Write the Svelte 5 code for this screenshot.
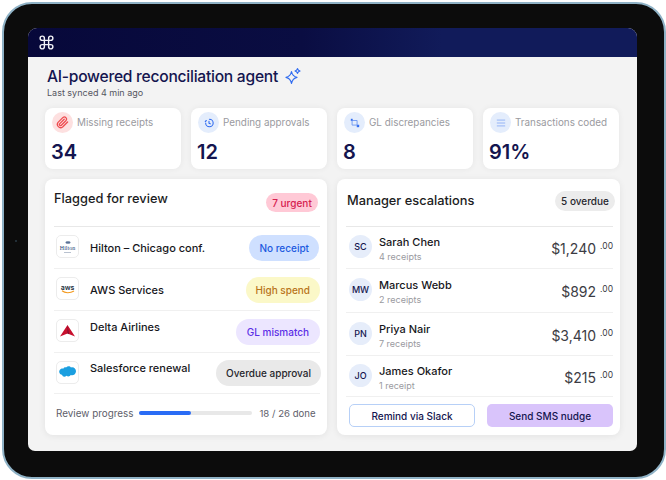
<script>
  const stats = [
    { kind: 'clip', tone: 'red', label: 'Missing receipts', value: '34' },
    { kind: 'clock', tone: 'blue', label: 'Pending approvals', value: '12' },
    { kind: 'crop', tone: 'blue', label: 'GL discrepancies', value: '8' },
    { kind: 'list', tone: 'blue', label: 'Transactions coded', value: '91%' }
  ];
  const flagged = [
    { logo: 'hilton', name: 'Hilton – Chicago conf.', tag: 'No receipt', tone: 't-blue', h: 42 },
    { logo: 'aws', name: 'AWS Services', tag: 'High spend', tone: 't-yellow', h: 42 },
    { logo: 'delta', name: 'Delta Airlines', tag: 'GL mismatch', tone: 't-purple', h: 42, up: true },
    { logo: 'sf', name: 'Salesforce renewal', tag: 'Overdue approval', tone: 't-grey', h: 41, up: true }
  ];
  const managers = [
    { init: 'SC', name: 'Sarah Chen', sub: '4 receipts', amt: '$1,240', h: 42 },
    { init: 'MW', name: 'Marcus Webb', sub: '2 receipts', amt: '$892', h: 44 },
    { init: 'PN', name: 'Priya Nair', sub: '7 receipts', amt: '$3,410', h: 43 },
    { init: 'JO', name: 'James Okafor', sub: '1 receipt', amt: '$215', h: 41 }
  ];
</script>

<div class="device">
  <span class="camera"></span>
  <div class="screen">
    <header class="topbar">
      <svg width="17" height="17" viewBox="0 0 24 24" fill="none" stroke="#f2f2f6" stroke-width="2" stroke-linejoin="round">
        <path d="M15 6v12a3 3 0 1 0 3-3H6a3 3 0 1 0 3 3V6a3 3 0 1 0-3 3h12a3 3 0 1 0-3-3" />
      </svg>
    </header>
    <main class="content">
      <div class="heading">
        <h1>AI-powered reconciliation agent</h1>
        <svg width="18" height="18" viewBox="0 0 18 18" fill="none" stroke="#2f6bf0" stroke-width="1.2" stroke-linejoin="round">
          <path d="M7.5 4.500C8.200 8 9.500 9.600 13 10.300 9.500 11 8.200 12.600 7.500 16.500 6.800 12.600 5.500 11 2 10.300 5.500 9.600 6.800 8 7.500 4.500Z" />
          <path d="M13.500 1.500C13.800 3 14.400 3.600 16 4 14.400 4.400 13.800 5 13.500 6.500 13.200 5 12.600 4.400 11 4 12.600 3.600 13.200 3 13.500 1.500Z" />
        </svg>
      </div>
      <p class="synced">Last synced 4 min ago</p>

      <section class="stats">
        {#each stats as s}
          <div class="stat">
            <div class="stat-top">
              <span class="stat-icon {s.tone}">
                {#if s.kind === 'clip'}
                  <svg width="13" height="13" viewBox="0 0 24 24" fill="none" stroke="#ee4c50" stroke-width="2.400" stroke-linecap="round" stroke-linejoin="round">
                    <path d="m21.400 11-9.200 9.200a6 6 0 0 1-8.400-8.400l9.200-9.200a4 4 0 0 1 5.600 5.600l-9.200 9.200a2 2 0 0 1-2.800-2.800l8.500-8.500" />
                  </svg>
                {:else if s.kind === 'clock'}
                  <svg width="10" height="10" viewBox="0 0 24 24" fill="none" stroke="#2f6bf0" stroke-width="2.600" stroke-linecap="round" stroke-linejoin="round">
                    <path d="M13 3a9 9 0 1 1-9 9" /><path d="M12 8v4.500l3 1.500" /><path d="M3 8.500 5.500 6" />
                  </svg>
                {:else if s.kind === 'crop'}
                  <svg width="10" height="10" viewBox="0 0 12 12" fill="none" stroke="#6f97f2" stroke-width="1.100">
                    <path d="M2.500 1v7.500H11" /><path d="M1 3h7.500v8" />
                    <rect x="1" y="1" width="2" height="2" fill="#2f6bf0" stroke="none" />
                    <rect x="8.500" y="8.500" width="2.500" height="2.500" fill="#2f6bf0" stroke="none" />
                  </svg>
                {:else}
                  <svg width="10" height="10" viewBox="0 0 12 12" fill="none" stroke="#8eaff6" stroke-width="1.100">
                    <path d="M1 2.500h10M1 6h10M1 9.500h10" />
                  </svg>
                {/if}
              </span>
              <span class="stat-label">{s.label}</span>
            </div>
            <div class="stat-value">{s.value}</div>
          </div>
        {/each}
      </section>

      <section class="panels">
        <div class="panel">
          <div class="panel-head left">
            <h2>Flagged for review</h2>
            <span class="badge urgent">7 urgent</span>
          </div>
          {#each flagged as f}
            <div class="row" style="height:{f.h}px">
              <span class="logo">
                {#if f.logo === 'hilton'}
                  <span class="hilton">
                    <svg width="6" height="3" viewBox="0 0 8 4"><ellipse cx="4" cy="2" rx="3.400" ry="1.700" fill="#5a7297" /></svg>
                    <b>Hilton</b>
                    <i></i>
                  </span>
                {:else if f.logo === 'aws'}
                  <span class="aws">
                    <b>aws</b>
                    <svg width="14" height="4" viewBox="0 0 14 4" fill="none"><path d="M1 .8C4 3.200 9 3.400 13 1" stroke="#f39a1f" stroke-width="1.100" /></svg>
                  </span>
                {:else if f.logo === 'delta'}
                  <svg width="15" height="12" viewBox="0 0 15 12">
                    <path d="M7.500 0 15 11.500 7.500 8.500 0 11.500Z" fill="#c8102e" />
                    <path d="M7.500 0 9 9.200 7.500 8.500Z" fill="#7d1030" />
                  </svg>
                {:else}
                  <svg width="17" height="12" viewBox="0 0 17 12">
                    <path d="M7 1.400C8.600-.3 11-.2 12 1.400c2.800-.7 5 1.400 5 3.800 0 2.800-2.800 4.700-5.200 3.800-.9 1.500-3 1.900-4.300.7C5.800 11.500 3.500 10.800 3 8.800.8 8.700-.5 6.200.6 4.300 1.400 2.900 3 2.300 4.200 2.700 5 1.500 6 1.200 7 1.400Z" fill="#1b9fe0" />
                  </svg>
                {/if}
              </span>
              <span class="row-name" class:up={f.up}>{f.name}</span>
              <span class="tag {f.tone}">{f.tag}</span>
            </div>
          {/each}
          <div class="progress">
            <span>Review progress</span>
            <span class="track"><span class="fill" style="width:46%"></span></span>
            <span class="done">18 / 26 done</span>
          </div>
        </div>

        <div class="panel">
          <div class="panel-head">
            <h2>Manager escalations</h2>
            <span class="badge overdue">5 overdue</span>
          </div>
          {#each managers as m}
            <div class="row person" style="height:{m.h}px">
              <span class="avatar">{m.init}</span>
              <div class="who">
                <span class="who-name">{m.name}</span>
                <span class="who-sub">{m.sub}</span>
              </div>
              <span class="amount">{m.amt}<sup>.00</sup></span>
            </div>
          {/each}
          <div class="actions">
            <button class="ghost">Remind via Slack</button>
            <button class="solid">Send SMS nudge</button>
          </div>
        </div>
      </section>
    </main>
  </div>
</div>

<style>
  :global(body) {
    background: #fff;
    font-family: Inter, "Liberation Sans", sans-serif;
  }
  .device {
    position: relative;
    box-sizing: border-box;
    width: 664px;
    height: 477px;
    margin: 2px 0 0 2px;
    padding: 24px 27px 26px 24px;
    background: #0c0c0c;
    border: 2px solid #8fb2c6;
    border-radius: 30px;
  }
  .camera {
    position: absolute;
    left: 11px;
    top: 236px;
    width: 2px;
    height: 2px;
    border-radius: 50%;
    background: #2a3a44;
  }
  .screen {
    height: 100%;
    overflow: hidden;
    border-radius: 9px 9px 7px 7px;
    background: #f3f3f3;
  }
  .topbar {
    display: flex;
    align-items: center;
    height: 29px;
    padding-left: 10px;
    background: linear-gradient(90deg, #07083a 0%, #0a0d42 45%, #111b5a 68%, #111b5a 100%);
  }
  .content {
    padding: 9px 17px 0;
  }
  .heading {
    display: flex;
    align-items: center;
    gap: 6px;
    margin-left: 2px;
    height: 20px;
  }
  h1 {
    margin: 0;
    font-size: 15.6px;
    font-weight: 500;
    letter-spacing: -0.25px;
    color: #14154f;
    white-space: nowrap;
  }
  .synced {
    margin: 1px 0 0 2px;
    font-size: 9px;
    line-height: 12px;
    color: #55565f;
  }
  .stats {
    display: grid;
    grid-template-columns: repeat(4, 136px);
    gap: 10px;
    margin-top: 9px;
  }
  .stat {
    height: 61px;
    box-sizing: border-box;
    padding: 4px 7px;
    border-radius: 8px;
    background: #fff;
    box-shadow: 0 0 6px rgba(0, 0, 0, 0.06);
  }
  .stat-top {
    display: flex;
    align-items: center;
    gap: 4px;
  }
  .stat-icon {
    display: flex;
    align-items: center;
    justify-content: center;
    width: 21px;
    height: 21px;
    border-radius: 50%;
  }
  .stat-icon.red { background: #fde0e0; }
  .stat-icon.blue { background: #e4edfc; }
  .stat-label {
    margin-bottom: 2px;
    font-size: 9.9px;
    color: #9a9aa0;
    white-space: nowrap;
  }
  .stat-value {
    margin: 7px 0 0 -1px;
    font-size: 20px;
    line-height: 24px;
    font-weight: 600;
    color: #14154f;
  }
  .panels {
    display: grid;
    grid-template-columns: 282px 283px;
    gap: 10px;
    margin-top: 10px;
  }
  .panel {
    height: 256px;
    box-sizing: border-box;
    padding: 0 7px 0 9px;
    border-radius: 8px;
    background: #fff;
    box-shadow: 0 1px 7px rgba(0, 0, 0, 0.07);
  }
  .panel-head {
    display: flex;
    align-items: center;
    justify-content: space-between;
    height: 48px;
    border-bottom: 1px solid #e8e8e8;
    box-sizing: border-box;
    padding-bottom: 4px;
  }
  .panel-head.left { padding-bottom: 0; }
  h2 {
    margin: 0 0 0 1px;
    font-size: 12.8px;
    font-weight: 500;
    color: #1c1c22;
  }
  .panel-head.left h2 { margin: 0 0 9px; }
  .badge {
    display: flex;
    align-items: center;
    justify-content: center;
    border-radius: 10px;
    font-size: 10px;
    font-weight: 500;
  }
  .urgent {
    width: 52px;
    height: 19px;
    margin-right: 2px;
    color: #d6204f;
    background: #ffc9d6;
  }
  .overdue {
    width: 60px;
    height: 20px;
    margin-right: -2px;
    color: #26262c;
    background: #ececec;
  }
  .row {
    display: flex;
    align-items: center;
    box-sizing: border-box;
    border-bottom: 1px solid #f0f0f0;
  }
  .logo {
    display: flex;
    flex: none;
    align-items: center;
    justify-content: center;
    box-sizing: border-box;
    width: 23px;
    height: 23px;
    margin: 0 0 2px 2px;
    border: 1px solid #ececec;
    border-radius: 5px;
  }
  .hilton, .aws {
    display: flex;
    flex-direction: column;
    align-items: center;
    line-height: 1;
  }
  .hilton svg { margin-bottom: 1px; }
  .hilton b {
    font-family: "Liberation Serif", serif;
    font-size: 6px;
    font-weight: 400;
    color: #1e3f78;
  }
  .hilton i {
    width: 7px;
    height: 1px;
    margin-top: 1px;
    background: #b9c2d0;
  }
  .aws b {
    margin-bottom: -1px;
    font-size: 7px;
    font-weight: 600;
    color: #232f3e;
  }
  .row-name {
    flex: 1;
    margin-left: 11px;
    font-size: 11px;
    font-weight: 500;
    color: #17171c;
    white-space: nowrap;
  }
  .row-name.up { margin-bottom: 10px; }
  .tag {
    display: flex;
    flex: none;
    align-items: center;
    justify-content: center;
    height: 26px;
    padding: 0 10px;
    border-radius: 13px;
    font-size: 10px;
    font-weight: 500;
  }
  .t-blue { margin-right: 1px; color: #1d5ae0; background: #cfe0ff; }
  .t-yellow { color: #b8741a; background: #fbf8c8; }
  .t-purple { padding: 0 11px; color: #5b2ee6; background: #ece6ff; }
  .t-grey { margin-right: -1px; color: #26262c; background: #e9e9e9; }
  .progress {
    display: flex;
    align-items: center;
    margin: 13px 0 0 2px;
    font-size: 9.9px;
    color: #60606a;
  }
  .track {
    flex: none;
    width: 113px;
    height: 4px;
    margin-left: 6px;
    border-radius: 2px;
    background: #e8e8e8;
  }
  .fill {
    display: block;
    height: 100%;
    border-radius: 2px;
    background: #2a6cf5;
  }
  .done { margin-left: 7px; font-size: 9.6px; }
  .person .avatar {
    display: flex;
    flex: none;
    align-items: center;
    justify-content: center;
    width: 23px;
    height: 23px;
    margin: 0 0 2px 3px;
    border-radius: 50%;
    background: #e6edfa;
    font-size: 9px;
    font-weight: 500;
    color: #14154f;
  }
  .who {
    display: flex;
    flex: 1;
    flex-direction: column;
    margin: 4px 0 0 7px;
  }
  .who-name {
    font-size: 11px;
    line-height: 15px;
    font-weight: 500;
    color: #17171c;
  }
  .who-sub {
    font-size: 9px;
    line-height: 14px;
    color: #9a9aa0;
  }
  .amount {
    display: flex;
    align-items: flex-start;
    margin: 2px 0 0;
    font-size: 14px;
    color: #3c3c44;
  }
  sup {
    margin-left: 4px;
    font-size: 8.5px;
    line-height: 12px;
  }
  .actions {
    display: grid;
    grid-template-columns: 126px 126px;
    gap: 12px;
    margin: 7px 0 0 3px;
  }
  button {
    height: 23px;
    padding: 0;
    border-radius: 5px;
    font-family: inherit;
    font-size: 10px;
    font-weight: 500;
    color: #14154f;
  }
  .ghost { background: #fff; border: 1px solid #b7d0f7; }
  .solid { background: #d9c4fb; border: 0; }
</style>
